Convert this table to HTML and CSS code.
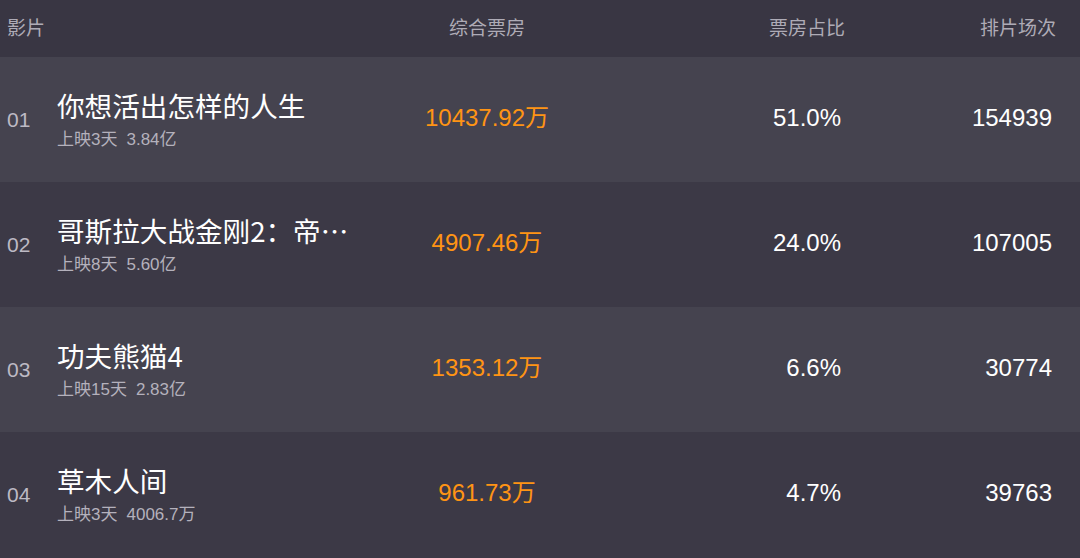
FILE: index.html
```html
<!DOCTYPE html>
<html lang="zh">
<head>
<meta charset="utf-8">
<link rel="stylesheet" href="styles.css">
</head>
<body>
<div class="board">
  <div class="head">
    <div class="h-film">影片</div>
    <div class="h-box">综合票房</div>
    <div class="h-rate">票房占比</div>
    <div class="h-show">排片场次</div>
  </div>
  <div class="row light">
    <div class="rank">01</div>
    <div class="film">
      <div class="title">你想活出怎样的人生</div>
      <div class="sub"><span>上映3天</span><span class="total">3.84亿</span></div>
    </div>
    <div class="box">10437.92万</div>
    <div class="rate">51.0%</div>
    <div class="show">154939</div>
  </div>
  <div class="row dark">
    <div class="rank">02</div>
    <div class="film">
      <div class="title clip">哥斯拉大战金刚2：帝国崛起</div>
      <div class="sub"><span>上映8天</span><span class="total">5.60亿</span></div>
    </div>
    <div class="box">4907.46万</div>
    <div class="rate">24.0%</div>
    <div class="show">107005</div>
  </div>
  <div class="row light">
    <div class="rank">03</div>
    <div class="film">
      <div class="title">功夫熊猫4</div>
      <div class="sub"><span>上映15天</span><span class="total">2.83亿</span></div>
    </div>
    <div class="box">1353.12万</div>
    <div class="rate">6.6%</div>
    <div class="show">30774</div>
  </div>
  <div class="row dark">
    <div class="rank">04</div>
    <div class="film">
      <div class="title">草木人间</div>
      <div class="sub"><span>上映3天</span><span class="total">4006.7万</span></div>
    </div>
    <div class="box">961.73万</div>
    <div class="rate">4.7%</div>
    <div class="show">39763</div>
  </div>
</div>
</body>
</html>
```

FILE: styles.css
```css
* { box-sizing: border-box; }
html, body {
  margin: 0;
  padding: 0;
  background: #3c3946;
  font-family: "Liberation Sans", "Noto Sans CJK SC", sans-serif;
}
.board {
  width: 1080px;
  height: 558px;
  display: flex;
  flex-direction: column;
}
.head, .row {
  display: grid;
  grid-template-columns: 50px 300px 260px 228px 211px;
  padding: 0 24px 0 7px;
  align-items: center;
}
.head {
  height: 57px;
  background: #393643;
  color: #aeabb6;
  font-size: 19px;
  line-height: 26px;
  font-family: "Noto Sans CJK SC", sans-serif;
  padding-bottom: 3px;
}
.h-film { grid-column: 1 / 3; }
.h-box { text-align: center; }
.h-rate, .h-show { text-align: right; }
.row {
  height: 125px;
  flex: none;
}
.row.light { background: #45434f; }
.row.dark { background: #3c3946; }
.rank {
  color: #bdbac4;
  font-size: 21px;
  line-height: 26px;
  padding-top: 1px;
}
.film {
  min-width: 0;
  padding-bottom: 2px;
}
.title {
  color: #ffffff;
  font-family: "Noto Sans CJK SC", sans-serif;
  font-size: 27.6px;
  line-height: 36px;
  white-space: nowrap;
  width: 292px;
}
.title.clip {
  overflow: hidden;
  text-overflow: ellipsis;
}
.sub {
  color: #b4b1bc;
  font-size: 17px;
  line-height: 20px;
  margin-top: 7px;
}
.total { margin-left: 9px; }
.box {
  color: #ff9414;
  font-size: 24px;
  line-height: 28px;
  text-align: center;
  padding-bottom: 3px;
}
.rate, .show {
  color: #ffffff;
  font-size: 24px;
  line-height: 28px;
  text-align: right;
  padding-right: 4px;
  padding-bottom: 3px;
}
```
